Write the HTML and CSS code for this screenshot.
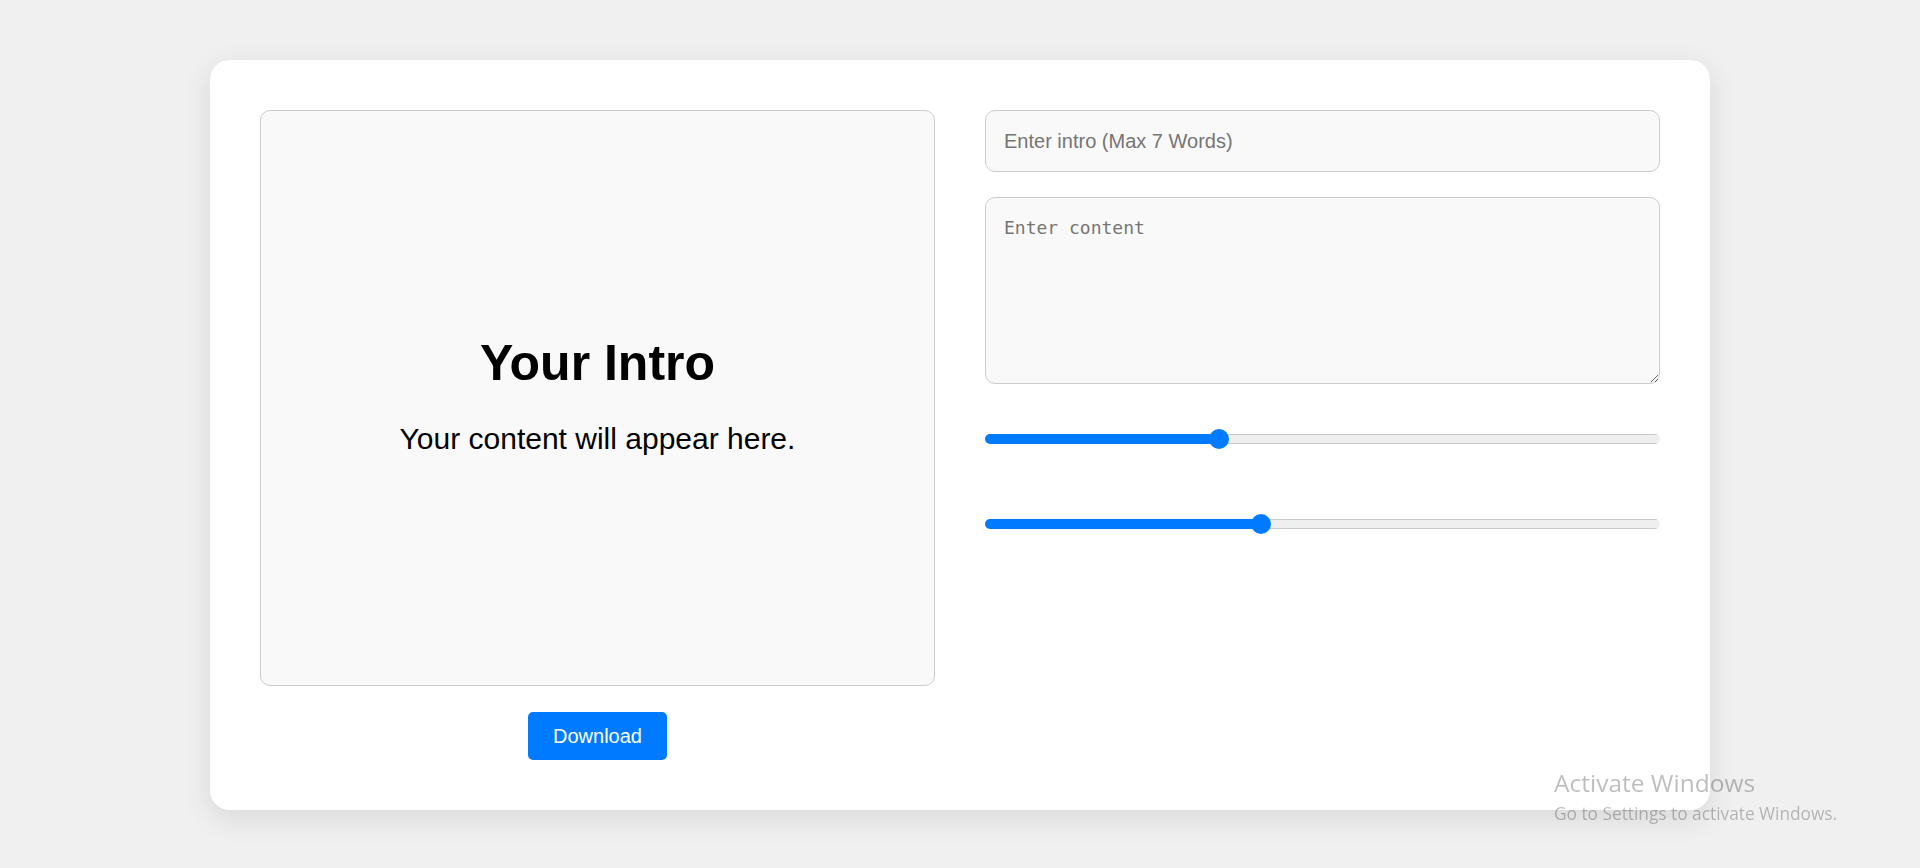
FILE: index.html
```html
<!DOCTYPE html>
<html lang="en">
<head>
<meta charset="utf-8">
<title>Intro Card Generator</title>
<link rel="stylesheet" href="styles.css">
</head>
<body>
<main class="card">
  <section class="left">
    <div class="preview">
      <div class="preview-text">
        <h1 class="preview-title">Your Intro</h1>
        <p class="preview-body">Your content will appear here.</p>
      </div>
    </div>
    <button class="download" type="button">Download</button>
  </section>
  <section class="right">
    <input class="field" type="text" placeholder="Enter intro (Max 7 Words)">
    <textarea class="area" placeholder="Enter content"></textarea>
    <input class="range range-first" type="range" min="0" max="100" step="any" value="34.2" style="--fill: 34.7%">
    <input class="range range-second" type="range" min="0" max="100" step="any" value="40.6" style="--fill: 40.9%">
  </section>
</main>
<div class="watermark">
  <div class="wm-title">Activate Windows</div>
  <div class="wm-sub">Go to Settings to activate Windows.</div>
</div>
</body>
</html>
```

FILE: styles.css
```css
* {
  box-sizing: border-box;
}

html, body {
  margin: 0;
  padding: 0;
}

body {
  min-height: 100vh;
  padding-top: 2px;
  background: #f0f0f0;
  font-family: "Liberation Sans", Arial, sans-serif;
  display: flex;
  align-items: center;
  justify-content: center;
}

.card {
  width: 1500px;
  height: 750px;
  background: #ffffff;
  border-radius: 20px;
  box-shadow: 0 8px 30px rgba(0, 0, 0, 0.1);
  padding: 50px;
  display: grid;
  grid-template-columns: 1fr 1fr;
  column-gap: 50px;
  align-items: start;
}

.left {
  display: flex;
  flex-direction: column;
  align-items: center;
}

.preview {
  width: 100%;
  height: 576px;
  background: #f9f9f9;
  border: 1px solid #cccccc;
  border-radius: 10px;
  display: flex;
  align-items: center;
  justify-content: center;
  padding-bottom: 6px;
  text-align: center;
  color: #000;
}

.preview-title {
  margin: 0 0 30px;
  font-size: 50px;
  font-weight: bold;
}

.preview-body {
  margin: 0;
  font-size: 30px;
}

.download {
  margin-top: 26px;
  height: 48px;
  padding: 0 25px;
  background: #007bff;
  color: #ffffff;
  border: none;
  border-radius: 5px;
  font-family: "Liberation Sans", Arial, sans-serif;
  font-size: 20px;
  line-height: 24px;
  cursor: pointer;
}

.right {
  display: flex;
  flex-direction: column;
}

.field,
.area {
  width: 100%;
  background: #f9f9f9;
  border: 1px solid #cccccc;
  border-radius: 10px;
  padding: 18px;
  color: #000;
  outline: none;
}

.field {
  height: 62px;
  font-family: "Liberation Sans", Arial, sans-serif;
  font-size: 20px;
}

.area {
  margin-top: 25px;
  height: 187px;
  padding-top: 19px;
  font-family: "DejaVu Sans Mono", monospace;
  font-size: 18px;
  resize: vertical;
}

.field::placeholder,
.area::placeholder {
  color: #757575;
}

.range {
  -webkit-appearance: none;
  appearance: none;
  width: 100%;
  height: 10px;
  margin: 0;
  border-radius: 5px;
  outline: none;
  background:
    linear-gradient(to right, #007bff var(--fill), transparent var(--fill)),
    linear-gradient(to bottom, #c9c9c9 1px, #efefef 1px, #efefef calc(100% - 1px), #c9c9c9 calc(100% - 1px));
}

.range-first {
  margin-top: 50px;
}

.range-second {
  margin-top: 75px;
}

.range::-webkit-slider-thumb {
  -webkit-appearance: none;
  appearance: none;
  width: 20px;
  height: 20px;
  border-radius: 50%;
  background: #007bff;
  border: none;
  cursor: pointer;
}

.watermark {
  position: fixed;
  left: 1554px;
  top: 767px;
  color: rgba(0, 0, 0, 0.26);
  font-family: "Open Sans", "Noto Sans", sans-serif;
  pointer-events: none;
}

.wm-title {
  font-size: 24.5px;
  line-height: 32px;
}

.wm-sub {
  font-size: 17.3px;
  line-height: 24px;
  margin-top: 3px;
}
```
